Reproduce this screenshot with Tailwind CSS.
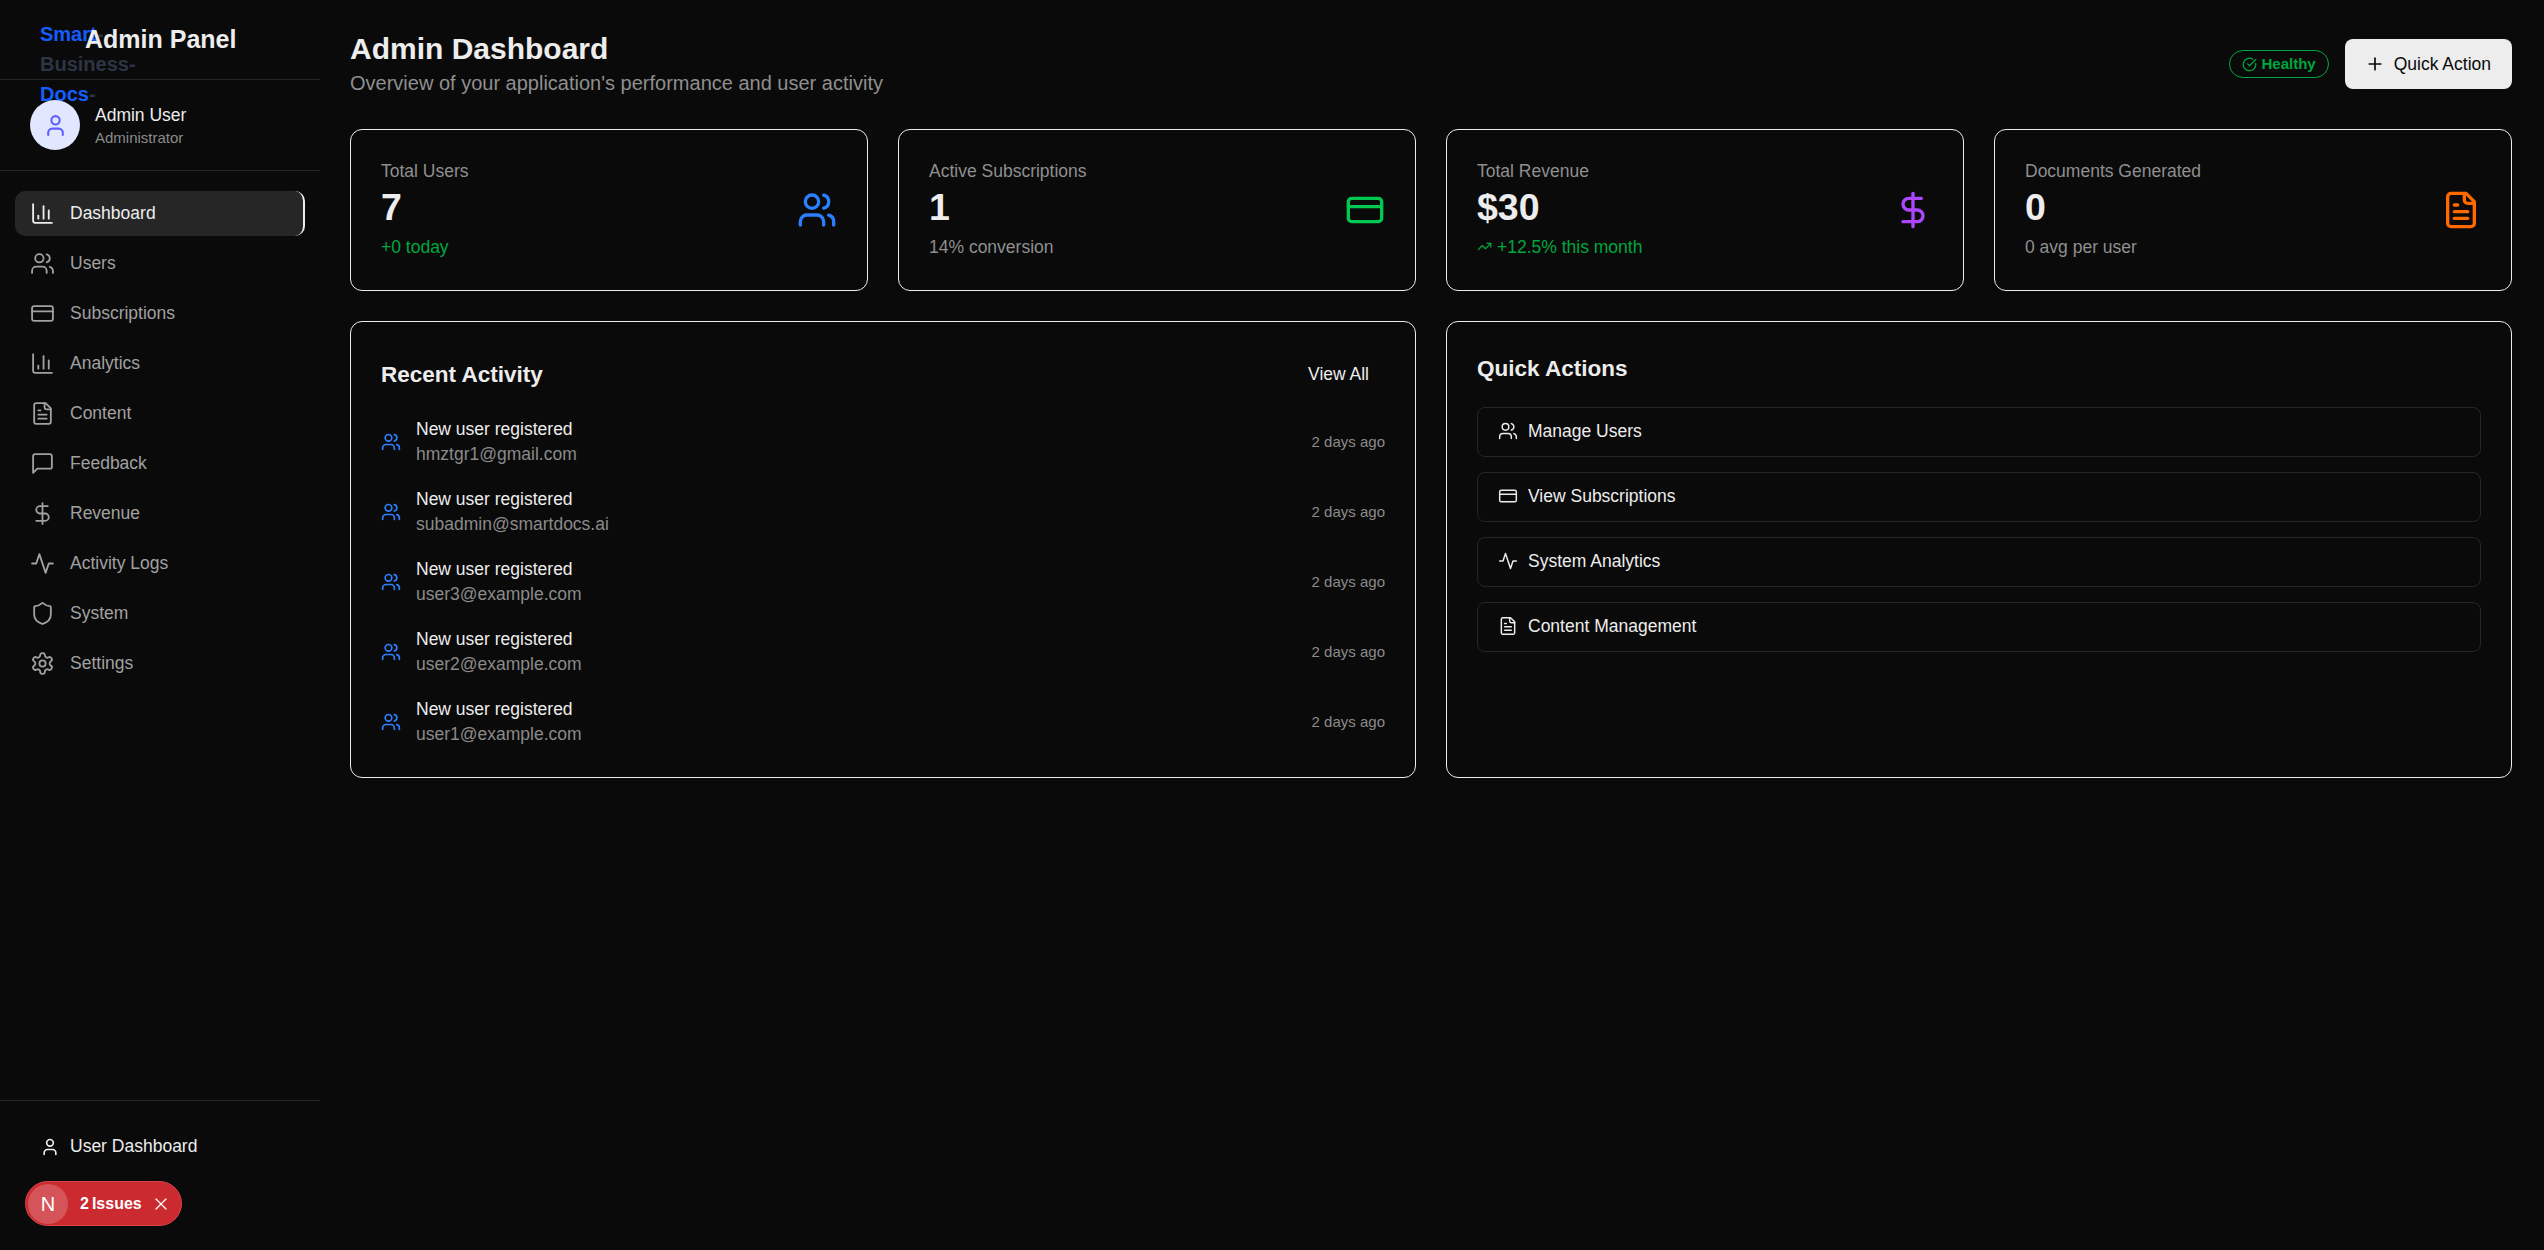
<!DOCTYPE html>
<html lang="en">
<head>
    <meta charset="UTF-8" />
    <meta name="viewport" content="width=device-width, initial-scale=1.0" />
    <title>Admin Dashboard</title>
    <script src="https://cdn.jsdelivr.net/npm/@tailwindcss/browser@4"></script>
</head>
<body class="bg-[#0a0a0a] text-[#ededed] h-screen overflow-hidden flex font-['Liberation_Sans',Arial,sans-serif]">

<!-- icon sprite -->
<svg class="hidden">
    <symbol id="i-users" viewBox="0 0 24 24"><path d="M16 21v-2a4 4 0 0 0-4-4H6a4 4 0 0 0-4 4v2"/><circle cx="9" cy="7" r="4"/><path d="M22 21v-2a4 4 0 0 0-3-3.87"/><path d="M16 3.13a4 4 0 0 1 0 7.75"/></symbol>
    <symbol id="i-card" viewBox="0 0 24 24"><rect x="2" y="5" width="20" height="14" rx="2"/><line x1="2" x2="22" y1="10" y2="10"/></symbol>
    <symbol id="i-chart" viewBox="0 0 24 24"><path d="M3 3v16a2 2 0 0 0 2 2h16"/><path d="M18 17V9"/><path d="M13 17V5"/><path d="M8 17v-3"/></symbol>
    <symbol id="i-file" viewBox="0 0 24 24"><path d="M15 2H6a2 2 0 0 0-2 2v16a2 2 0 0 0 2 2h12a2 2 0 0 0 2-2V7Z"/><path d="M14 2v4a2 2 0 0 0 2 2h4"/><path d="M10 9H8"/><path d="M16 13H8"/><path d="M16 17H8"/></symbol>
    <symbol id="i-message" viewBox="0 0 24 24"><path d="M21 15a2 2 0 0 1-2 2H7l-4 4V5a2 2 0 0 1 2-2h14a2 2 0 0 1 2 2z"/></symbol>
    <symbol id="i-dollar" viewBox="0 0 24 24"><line x1="12" x2="12" y1="2" y2="22"/><path d="M17 5H9.5a3.5 3.5 0 0 0 0 7h5a3.5 3.5 0 0 1 0 7H6"/></symbol>
    <symbol id="i-activity" viewBox="0 0 24 24"><path d="M22 12h-4l-3 9L9 3l-3 9H2"/></symbol>
    <symbol id="i-shield" viewBox="0 0 24 24"><path d="M20 13c0 5-3.5 7.5-7.66 8.95a1 1 0 0 1-.67-.01C7.5 20.5 4 18 4 13V6a1 1 0 0 1 1-1c2 0 4.5-1.2 6.24-2.72a1.17 1.17 0 0 1 1.52 0C14.51 3.81 17 5 19 5a1 1 0 0 1 1 1z"/></symbol>
    <symbol id="i-settings" viewBox="0 0 24 24"><path d="M12.22 2h-.44a2 2 0 0 0-2 2v.18a2 2 0 0 1-1 1.73l-.43.25a2 2 0 0 1-2 0l-.15-.08a2 2 0 0 0-2.73.73l-.22.38a2 2 0 0 0 .73 2.73l.15.1a2 2 0 0 1 1 1.72v.51a2 2 0 0 1-1 1.74l-.15.09a2 2 0 0 0-.73 2.73l.22.38a2 2 0 0 0 2.73.73l.15-.08a2 2 0 0 1 2 0l.43.25a2 2 0 0 1 1 1.73V20a2 2 0 0 0 2 2h.44a2 2 0 0 0 2-2v-.18a2 2 0 0 1 1-1.73l.43-.25a2 2 0 0 1 2 0l.15.08a2 2 0 0 0 2.73-.73l.22-.39a2 2 0 0 0-.73-2.73l-.15-.08a2 2 0 0 1-1-1.74v-.5a2 2 0 0 1 1-1.74l.15-.09a2 2 0 0 0 .73-2.73l-.22-.38a2 2 0 0 0-2.73-.73l-.15.08a2 2 0 0 1-2 0l-.43-.25a2 2 0 0 1-1-1.73V4a2 2 0 0 0-2-2z"/><circle cx="12" cy="12" r="3"/></symbol>
    <symbol id="i-user" viewBox="0 0 24 24"><path d="M19 21v-2a4 4 0 0 0-4-4H9a4 4 0 0 0-4 4v2"/><circle cx="12" cy="7" r="4"/></symbol>
    <symbol id="i-plus" viewBox="0 0 24 24"><path d="M5 12h14"/><path d="M12 5v14"/></symbol>
    <symbol id="i-check" viewBox="0 0 24 24"><path d="M21.801 10A10 10 0 1 1 17 3.335"/><path d="m9 11 3 3L22 4"/></symbol>
    <symbol id="i-trend" viewBox="0 0 24 24"><path d="M22 7 13.5 15.5 8.5 10.5 2 17"/><path d="M16 7h6v6"/></symbol>
    <symbol id="i-x" viewBox="0 0 24 24"><path d="M18 6 6 18"/><path d="m6 6 12 12"/></symbol>
</svg>

<!-- Sidebar -->
<aside class="w-[320px] shrink-0 h-full flex flex-col">
    <div class="h-[80px] shrink-0 border-b border-[#262626] pt-[19px] pl-[40px] flex items-start">
        <div class="w-[45px] h-[40px] shrink-0 text-[20px] leading-[30px] font-bold text-[#2d3544]"><span class="text-[#155dfc]">Smart</span>-Business-<span class="text-[#155dfc]">Docs</span>-</div>
        <h1 class="text-[25px] leading-[40px] font-bold text-[#ededed]">Admin Panel</h1>
    </div>
    <div class="h-[91px] shrink-0 border-b border-[#262626] pl-[30px] pt-[20px] flex items-start gap-[15px]">
        <div class="w-[50px] h-[50px] rounded-full bg-[#e0e7ff] flex items-center justify-center text-[#615fff]">
            <svg class="w-[25px] h-[25px] fill-none stroke-current stroke-2 [stroke-linecap:round] [stroke-linejoin:round]"><use href="#i-user"/></svg>
        </div>
        <div class="pt-[4px]">
            <p class="text-[17.5px] leading-[22px] font-medium text-[#ededed]">Admin User</p>
            <p class="text-[15px] leading-[20px] mt-[2px] text-[#8a8a8a]">Administrator</p>
        </div>
    </div>
    <nav class="flex-1 pt-[20px] px-[15px] flex flex-col gap-[5px] text-[17.5px] text-[#a1a1a1]">
        <a class="h-[45px] flex items-center gap-[15px] px-[15px] rounded-[10px] bg-[#262626] text-[#ededed] font-medium border-r-2 border-[#ededed]"><svg class="w-[25px] h-[25px] fill-none stroke-current stroke-[1.75] [stroke-linecap:round] [stroke-linejoin:round]"><use href="#i-chart"/></svg>Dashboard</a>
        <a class="h-[45px] flex items-center gap-[15px] px-[15px]"><svg class="w-[25px] h-[25px] fill-none stroke-current stroke-[1.75] [stroke-linecap:round] [stroke-linejoin:round]"><use href="#i-users"/></svg>Users</a>
        <a class="h-[45px] flex items-center gap-[15px] px-[15px]"><svg class="w-[25px] h-[25px] fill-none stroke-current stroke-[1.75] [stroke-linecap:round] [stroke-linejoin:round]"><use href="#i-card"/></svg>Subscriptions</a>
        <a class="h-[45px] flex items-center gap-[15px] px-[15px]"><svg class="w-[25px] h-[25px] fill-none stroke-current stroke-[1.75] [stroke-linecap:round] [stroke-linejoin:round]"><use href="#i-chart"/></svg>Analytics</a>
        <a class="h-[45px] flex items-center gap-[15px] px-[15px]"><svg class="w-[25px] h-[25px] fill-none stroke-current stroke-[1.75] [stroke-linecap:round] [stroke-linejoin:round]"><use href="#i-file"/></svg>Content</a>
        <a class="h-[45px] flex items-center gap-[15px] px-[15px]"><svg class="w-[25px] h-[25px] fill-none stroke-current stroke-[1.75] [stroke-linecap:round] [stroke-linejoin:round]"><use href="#i-message"/></svg>Feedback</a>
        <a class="h-[45px] flex items-center gap-[15px] px-[15px]"><svg class="w-[25px] h-[25px] fill-none stroke-current stroke-[1.75] [stroke-linecap:round] [stroke-linejoin:round]"><use href="#i-dollar"/></svg>Revenue</a>
        <a class="h-[45px] flex items-center gap-[15px] px-[15px]"><svg class="w-[25px] h-[25px] fill-none stroke-current stroke-[1.75] [stroke-linecap:round] [stroke-linejoin:round]"><use href="#i-activity"/></svg>Activity Logs</a>
        <a class="h-[45px] flex items-center gap-[15px] px-[15px]"><svg class="w-[25px] h-[25px] fill-none stroke-current stroke-[1.75] [stroke-linecap:round] [stroke-linejoin:round]"><use href="#i-shield"/></svg>System</a>
        <a class="h-[45px] flex items-center gap-[15px] px-[15px]"><svg class="w-[25px] h-[25px] fill-none stroke-current stroke-[1.75] [stroke-linecap:round] [stroke-linejoin:round]"><use href="#i-settings"/></svg>Settings</a>
    </nav>
    <div class="h-[150px] shrink-0 border-t border-[#262626] pt-[23px] pl-[40px]">
        <a class="h-[45px] flex items-center gap-[10px] text-[17.5px] font-medium text-[#ededed]"><svg class="w-[20px] h-[20px] fill-none stroke-current stroke-2 [stroke-linecap:round] [stroke-linejoin:round]"><use href="#i-user"/></svg>User Dashboard</a>
    </div>
</aside>

<!-- Main -->
<main class="flex-1 min-w-0 pl-[30px] pr-[32px] pt-[30px]">
    <div class="flex items-center justify-between mb-[31px]">
        <div>
            <h2 class="text-[30px] leading-[37px] font-bold text-[#ededed]">Admin Dashboard</h2>
            <p class="text-[20px] leading-[30px] mt-[1px] text-[#8f8f8f]">Overview of your application's performance and user activity</p>
        </div>
        <div class="flex items-center gap-[16px]">
            <span class="h-[28px] px-[12px] flex items-center gap-[5px] rounded-full border border-green-600 text-green-600 text-[15px] font-bold"><svg class="w-[15px] h-[15px] fill-none stroke-current stroke-2 [stroke-linecap:round] [stroke-linejoin:round]"><use href="#i-check"/></svg>Healthy</span>
            <button class="h-[50px] pl-[20px] pr-[21px] flex items-center gap-[9px] rounded-[8px] bg-[#ededed] text-[#0a0a0a] text-[17.5px] font-medium"><svg class="w-[20px] h-[20px] fill-none stroke-current stroke-2 [stroke-linecap:round] [stroke-linejoin:round]"><use href="#i-plus"/></svg>Quick Action</button>
        </div>
    </div>

    <!-- Stat cards -->
    <div class="grid grid-cols-4 gap-[30px] mb-[30px]">
        <div class="h-[162px] border border-[#ededed] rounded-[12px] p-[30px] flex items-center justify-between">
            <div class="mb-[3px]">
                <p class="text-[17.5px] leading-[22px] text-[#8f8f8f]">Total Users</p>
                <p class="text-[37.5px] leading-[45px] mt-[3px] font-bold text-[#ededed]">7</p>
                <p class="text-[17.5px] leading-[22px] mt-[6px] text-green-600">+0 today</p>
            </div>
            <svg class="w-[40px] h-[40px] text-blue-500 fill-none stroke-current stroke-2 [stroke-linecap:round] [stroke-linejoin:round]"><use href="#i-users"/></svg>
        </div>
        <div class="h-[162px] border border-[#ededed] rounded-[12px] p-[30px] flex items-center justify-between">
            <div class="mb-[3px]">
                <p class="text-[17.5px] leading-[22px] text-[#8f8f8f]">Active Subscriptions</p>
                <p class="text-[37.5px] leading-[45px] mt-[3px] font-bold text-[#ededed]">1</p>
                <p class="text-[17.5px] leading-[22px] mt-[6px] text-[#8f8f8f]">14% conversion</p>
            </div>
            <svg class="w-[40px] h-[40px] text-green-500 fill-none stroke-current stroke-2 [stroke-linecap:round] [stroke-linejoin:round]"><use href="#i-card"/></svg>
        </div>
        <div class="h-[162px] border border-[#ededed] rounded-[12px] p-[30px] flex items-center justify-between">
            <div class="mb-[3px]">
                <p class="text-[17.5px] leading-[22px] text-[#8f8f8f]">Total Revenue</p>
                <p class="text-[37.5px] leading-[45px] mt-[3px] font-bold text-[#ededed]">$30</p>
                <p class="text-[17.5px] leading-[22px] mt-[6px] text-green-600 flex items-center gap-[5px]"><svg class="w-[15px] h-[15px] fill-none stroke-current stroke-2 [stroke-linecap:round] [stroke-linejoin:round]"><use href="#i-trend"/></svg>+12.5% this month</p>
            </div>
            <svg class="w-[40px] h-[40px] text-purple-500 fill-none stroke-current stroke-2 [stroke-linecap:round] [stroke-linejoin:round]"><use href="#i-dollar"/></svg>
        </div>
        <div class="h-[162px] border border-[#ededed] rounded-[12px] p-[30px] flex items-center justify-between">
            <div class="mb-[3px]">
                <p class="text-[17.5px] leading-[22px] text-[#8f8f8f]">Documents Generated</p>
                <p class="text-[37.5px] leading-[45px] mt-[3px] font-bold text-[#ededed]">0</p>
                <p class="text-[17.5px] leading-[22px] mt-[6px] text-[#8f8f8f]">0 avg per user</p>
            </div>
            <svg class="w-[40px] h-[40px] text-orange-500 fill-none stroke-current stroke-2 [stroke-linecap:round] [stroke-linejoin:round]"><use href="#i-file"/></svg>
        </div>
    </div>

    <div class="grid grid-cols-2 gap-[30px]">
        <!-- Recent activity -->
        <section class="h-[457px] border border-[#ededed] rounded-[12px] px-[30px] pt-[30px]">
            <div class="h-[45px] flex items-center justify-between">
                <h3 class="text-[22.5px] font-bold text-[#ededed]">Recent Activity</h3>
                <button class="px-[16px] h-[45px] text-[17.5px] font-medium text-[#ededed]">View All</button>
            </div>
            <ul class="mt-[20px] flex flex-col gap-[20px]">
                <li class="h-[50px] flex items-center">
                    <svg class="w-[20px] h-[20px] mr-[15px] shrink-0 text-blue-500 fill-none stroke-current stroke-2 [stroke-linecap:round] [stroke-linejoin:round]"><use href="#i-users"/></svg>
                    <div class="flex-1"><p class="text-[17.5px] leading-[25px] font-medium text-[#ededed]">New user registered</p><p class="text-[17.5px] leading-[25px] text-[#8a8a8a]">hmztgr1@gmail.com</p></div>
                    <span class="text-[15px] text-[#8a8a8a]">2 days ago</span>
                </li>
                <li class="h-[50px] flex items-center">
                    <svg class="w-[20px] h-[20px] mr-[15px] shrink-0 text-blue-500 fill-none stroke-current stroke-2 [stroke-linecap:round] [stroke-linejoin:round]"><use href="#i-users"/></svg>
                    <div class="flex-1"><p class="text-[17.5px] leading-[25px] font-medium text-[#ededed]">New user registered</p><p class="text-[17.5px] leading-[25px] text-[#8a8a8a]">subadmin@smartdocs.ai</p></div>
                    <span class="text-[15px] text-[#8a8a8a]">2 days ago</span>
                </li>
                <li class="h-[50px] flex items-center">
                    <svg class="w-[20px] h-[20px] mr-[15px] shrink-0 text-blue-500 fill-none stroke-current stroke-2 [stroke-linecap:round] [stroke-linejoin:round]"><use href="#i-users"/></svg>
                    <div class="flex-1"><p class="text-[17.5px] leading-[25px] font-medium text-[#ededed]">New user registered</p><p class="text-[17.5px] leading-[25px] text-[#8a8a8a]">user3@example.com</p></div>
                    <span class="text-[15px] text-[#8a8a8a]">2 days ago</span>
                </li>
                <li class="h-[50px] flex items-center">
                    <svg class="w-[20px] h-[20px] mr-[15px] shrink-0 text-blue-500 fill-none stroke-current stroke-2 [stroke-linecap:round] [stroke-linejoin:round]"><use href="#i-users"/></svg>
                    <div class="flex-1"><p class="text-[17.5px] leading-[25px] font-medium text-[#ededed]">New user registered</p><p class="text-[17.5px] leading-[25px] text-[#8a8a8a]">user2@example.com</p></div>
                    <span class="text-[15px] text-[#8a8a8a]">2 days ago</span>
                </li>
                <li class="h-[50px] flex items-center">
                    <svg class="w-[20px] h-[20px] mr-[15px] shrink-0 text-blue-500 fill-none stroke-current stroke-2 [stroke-linecap:round] [stroke-linejoin:round]"><use href="#i-users"/></svg>
                    <div class="flex-1"><p class="text-[17.5px] leading-[25px] font-medium text-[#ededed]">New user registered</p><p class="text-[17.5px] leading-[25px] text-[#8a8a8a]">user1@example.com</p></div>
                    <span class="text-[15px] text-[#8a8a8a]">2 days ago</span>
                </li>
            </ul>
        </section>

        <!-- Quick actions -->
        <section class="h-[457px] border border-[#ededed] rounded-[12px] px-[30px] pt-[30px]">
            <h3 class="text-[22.5px] leading-[34px] font-bold text-[#ededed]">Quick Actions</h3>
            <div class="mt-[21px] flex flex-col gap-[15px] text-[17.5px] font-medium text-[#ededed]">
                <a class="h-[50px] flex items-center gap-[10px] px-[20px] pb-[2px] border border-[#262626] rounded-[8px]"><svg class="w-[20px] h-[20px] fill-none stroke-current stroke-[1.75] [stroke-linecap:round] [stroke-linejoin:round]"><use href="#i-users"/></svg>Manage Users</a>
                <a class="h-[50px] flex items-center gap-[10px] px-[20px] pb-[2px] border border-[#262626] rounded-[8px]"><svg class="w-[20px] h-[20px] fill-none stroke-current stroke-[1.75] [stroke-linecap:round] [stroke-linejoin:round]"><use href="#i-card"/></svg>View Subscriptions</a>
                <a class="h-[50px] flex items-center gap-[10px] px-[20px] pb-[2px] border border-[#262626] rounded-[8px]"><svg class="w-[20px] h-[20px] fill-none stroke-current stroke-[1.75] [stroke-linecap:round] [stroke-linejoin:round]"><use href="#i-activity"/></svg>System Analytics</a>
                <a class="h-[50px] flex items-center gap-[10px] px-[20px] pb-[2px] border border-[#262626] rounded-[8px]"><svg class="w-[20px] h-[20px] fill-none stroke-current stroke-[1.75] [stroke-linecap:round] [stroke-linejoin:round]"><use href="#i-file"/></svg>Content Management</a>
            </div>
        </section>
    </div>
</main>

<!-- Next.js dev issues pill -->
<div class="absolute left-[25px] top-[1181px] w-[157px] h-[45px] rounded-full bg-[#ca2a30] border border-[#d9434a] flex items-center pl-[2px] text-white">
    <span class="w-[40px] h-[40px] rounded-full bg-white/20 flex items-center justify-center text-[20px]">N</span>
    <span class="ml-[12px] text-[16px] font-bold">2</span>
    <span class="ml-[3px] text-[16px] font-bold">Issues</span>
    <svg class="ml-[9px] w-[20px] h-[20px] fill-none stroke-current stroke-[1.5] [stroke-linecap:round] [stroke-linejoin:round]"><use href="#i-x"/></svg>
</div>
</body>
</html>
